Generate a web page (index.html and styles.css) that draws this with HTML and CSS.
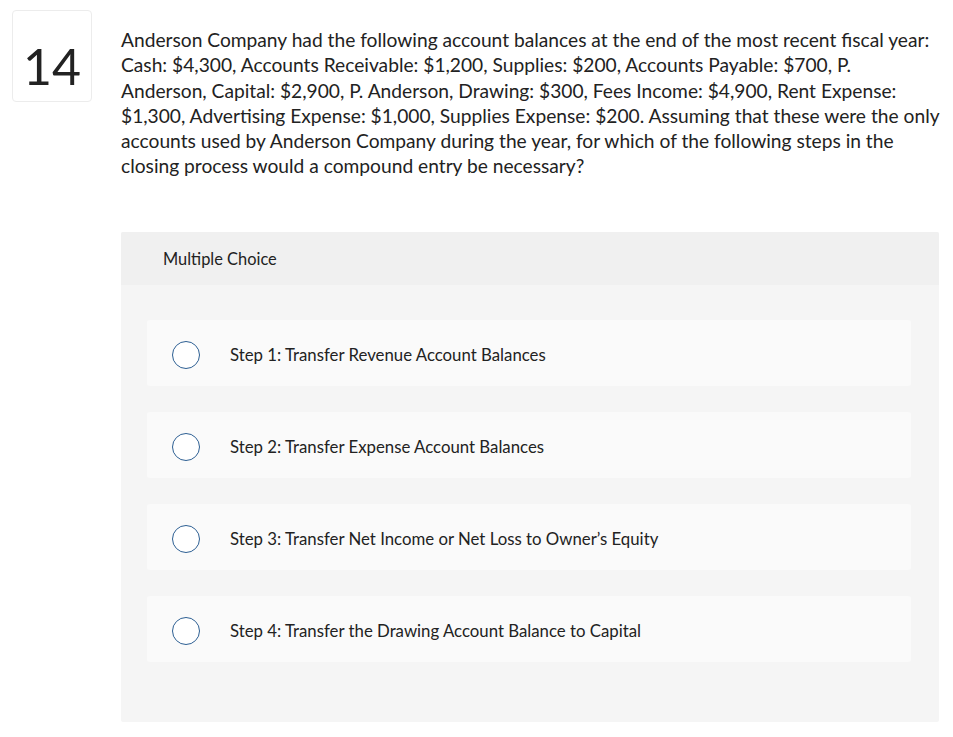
FILE: index.html
```html
<!DOCTYPE html>
<html lang="en">
<head>
<meta charset="utf-8">
<title>Question 14</title>
<link rel="stylesheet" href="styles.css">
</head>
<body>
<div class="question">
  <div class="qnum">14</div>
  <div class="qbody">
    <p class="prompt">Anderson Company had the following account balances at the end of the most recent fiscal year:<br>Cash: $4,300, Accounts Receivable: $1,200, Supplies: $200, Accounts Payable: $700, P.<br>Anderson, Capital: $2,900, P. Anderson, Drawing: $300, Fees Income: $4,900, Rent Expense:<br>$1,300, Advertising Expense: $1,000, Supplies Expense: $200. Assuming that these were the only<br>accounts used by Anderson Company during the year, for which of the following steps in the<br>closing process would a compound entry be necessary?</p>
    <div class="mc">
      <div class="mc-head">Multiple Choice</div>
      <div class="mc-list">
        <label class="choice">
          <span class="radio"></span>
          <span class="choice-text">Step 1: Transfer Revenue Account Balances</span>
        </label>
        <label class="choice">
          <span class="radio"></span>
          <span class="choice-text">Step 2: Transfer Expense Account Balances</span>
        </label>
        <label class="choice">
          <span class="radio"></span>
          <span class="choice-text">Step 3: Transfer Net Income or Net Loss to Owner’s Equity</span>
        </label>
        <label class="choice">
          <span class="radio"></span>
          <span class="choice-text">Step 4: Transfer the Drawing Account Balance to Capital</span>
        </label>
      </div>
    </div>
  </div>
</div>
</body>
</html>
```
FILE: styles.css
```css
html, body {
  margin: 0;
  padding: 0;
  background: #fff;
}
body {
  font-family: Lato, "Open Sans", Arial, sans-serif;
  color: #222;
}
.question {
  display: flex;
  align-items: flex-start;
  padding: 10px 14px 0 12px;
  gap: 29px;
}
.qnum {
  flex: 0 0 auto;
  box-sizing: border-box;
  width: 80px;
  height: 92px;
  border: 1px solid #ececec;
  border-radius: 4px;
  display: flex;
  align-items: center;
  justify-content: center;
  font-size: 50px;
  font-weight: 400;
  color: #222;
  padding-top: 20px;
}
.qbody {
  flex: 1 1 auto;
  width: 818px;
}
.prompt {
  margin: 17px -10px 0 0;
  font-size: 19.2px;
  line-height: 25.3px;
  color: #222;
}
.mc {
  margin-top: 53px;
  background: #f5f5f5;
  border-radius: 2px;
  padding-bottom: 60px;
}
.mc-head {
  background: #f0f0f0;
  height: 53px;
  display: flex;
  align-items: center;
  padding-left: 42px;
  font-size: 16.4px;
  color: #222;
  border-radius: 2px 2px 0 0;
}
.mc-list {
  display: flex;
  flex-direction: column;
  gap: 26px;
  padding: 35px 28px 0 26px;
}
.choice {
  display: flex;
  align-items: center;
  height: 66px;
  background: #fafafa;
  border-radius: 3px;
  padding-left: 25px;
  padding-top: 4px;
  box-sizing: border-box;
}
.radio {
  box-sizing: border-box;
  width: 28px;
  height: 28px;
  border: 1.5px solid #2d5f93;
  border-radius: 50%;
  background: #fff;
  flex: 0 0 auto;
}
.choice-text {
  margin-left: 30px;
  font-size: 16.8px;
  color: #222;
}
```
